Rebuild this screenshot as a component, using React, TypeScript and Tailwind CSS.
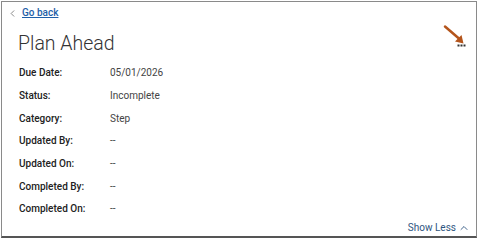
import { ChevronLeft, ChevronUp } from "lucide-react";

const rows = [
  { label: "Due Date:", value: "05/01/2026" },
  { label: "Status:", value: "Incomplete" },
  { label: "Category:", value: "Step" },
  { label: "Updated By:", value: "--" },
  { label: "Updated On:", value: "--" },
  { label: "Completed By:", value: "--" },
  { label: "Completed On:", value: "--" },
];

export default function App() {
  return (
    <div className="w-[480px] h-[242px] bg-white p-px font-['Roboto',sans-serif]">
      <div className="relative h-[237px] w-[476px] border border-[#8a8a8a] border-b-2 border-b-[#555] bg-white">
        <a href="#" className="flex items-center gap-[4px] pl-[5px] pt-[4px] text-[10px] font-medium leading-[14px] text-[#1f5fa8] underline">
          <ChevronLeft size={11} strokeWidth={1.5} className="text-[#555]" />
          Go back
        </a>
        <h1 className="pl-[16px] pt-[12px] text-[19.5px] font-light leading-[24px] text-[#333]">Plan Ahead</h1>
        <div className="pl-[17px] pt-[6px]">
          {rows.map((r) => (
            <div key={r.label} className="flex h-[22.7px] items-center text-[10px] leading-[14px]">
              <span className="w-[91px] font-medium text-[#222]">{r.label}</span>
              <span className="text-[#444]">{r.value}</span>
            </div>
          ))}
        </div>
        <div className="absolute left-[439px] top-[21px]">
          <svg width="30" height="26" viewBox="0 0 30 26">
            <path d="M4 3.5 L18.5 16" stroke="#b4551c" strokeWidth="2.5" strokeLinecap="round" />
            <path d="M14 18.5 L22.5 20.5 L20.5 12 Z" fill="#b4551c" />
            <rect x="16.5" y="21.5" width="2" height="2" fill="#333" />
            <rect x="19.5" y="21.5" width="2" height="2" fill="#333" />
            <rect x="22.5" y="21.5" width="2" height="2" fill="#333" />
          </svg>
        </div>
        <div className="absolute bottom-[1px] right-[6px] flex items-center gap-[2px] text-[10px] leading-[14px] text-[#2e5580]">
          Show Less
          <ChevronUp size={12} strokeWidth={1.8} />
        </div>
      </div>
    </div>
  );
}
